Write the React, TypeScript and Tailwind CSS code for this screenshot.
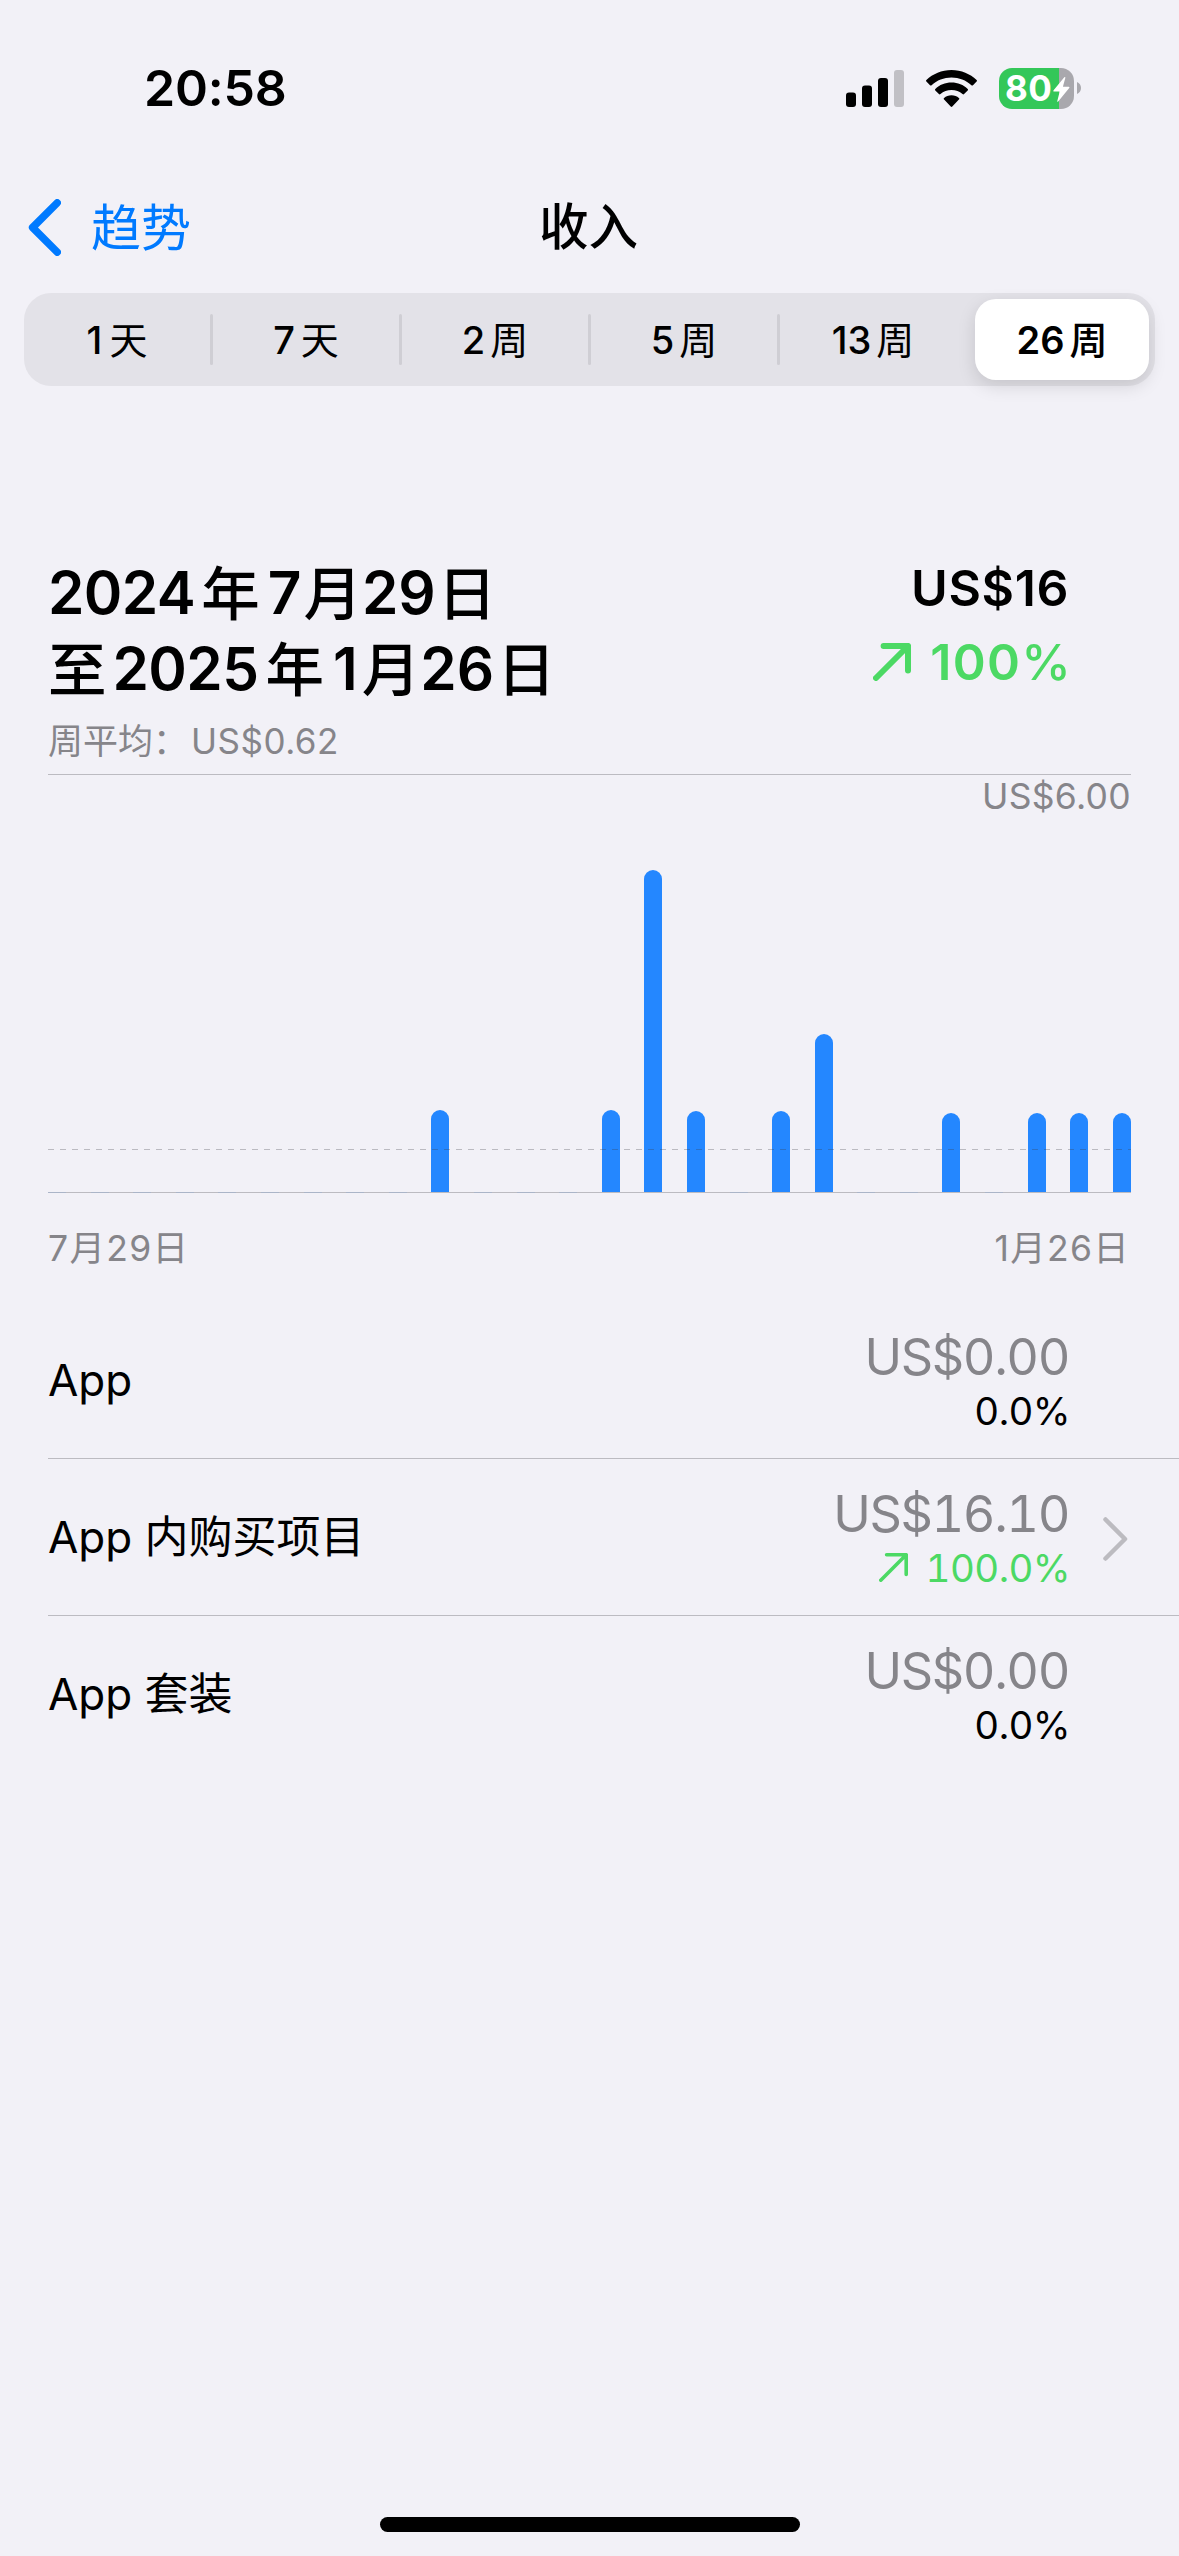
import React from "react";

const GRAY = "text-[#86858a]";

const periods = [
  { n: "1", unit: "天", gap: "ml-[7px]" },
  { n: "7", unit: "天", gap: "ml-[6px]" },
  { n: "2", unit: "周", gap: "ml-[5px]" },
  { n: "5", unit: "周", gap: "ml-[5px]" },
  { n: "13", unit: "周", gap: "ml-[5px]" },
];

// Weekly proceeds as bar heights in pixels, one entry for each of the 26 weeks
const weeks = [
  0, 0, 0, 0, 0, 0, 0, 0, 0, 82, 0, 0, 0, 82, 322, 81, 0, 81, 158, 0, 0, 79, 0,
  79, 79, 79,
];

const rows = [
  { label: "App", amount: "US$0.00", change: "0.0%", up: false },
  { label: "App 内购买项目", amount: "US$16.10", change: "100.0%", up: true },
  { label: "App 套装", amount: "US$0.00", change: "0.0%", up: false },
];

function Arrow({ size, stroke, className }: { size: number; stroke: number; className: string }) {
  const a = stroke / 2;
  const b = size - a;
  return (
    <svg width={size} height={size} className={className} fill="none" stroke="#4cd964" strokeWidth={stroke} strokeLinecap="round" strokeLinejoin="round">
      <path d={`M${a} ${b}L${b} ${a}M${size * 0.2 + a} ${a}H${b}V${size * 0.8 - a}`} />
    </svg>
  );
}

function StatusBar() {
  return (
    <div className="flex h-[176px] items-center justify-between pl-[144px] pr-[98px]">
      <span className="text-[50px] font-semibold leading-none tracking-[-0.2px]">20:58</span>
      <div className="flex items-center">
        <svg width="58" height="37" className="mr-[22px]">
          <rect x="0" y="22.500" width="10" height="14.500" rx="3" />
          <rect x="16" y="15.500" width="10" height="21.500" rx="3" />
          <rect x="32" y="8" width="10" height="29" rx="3" />
          <rect x="48" y="0" width="10" height="37" rx="3" fill="#c1c0c5" />
        </svg>
        <svg width="51" height="37" viewBox="0 0 51 37" className="mr-[22px]">
          <path d="M25.500 0C35.300 0 44.200 3.800 50.600 10.100Q51.300 10.800 50.600 11.600L47 15.200Q46.200 15.900 45.400 15.200C40 10.300 33.100 7.500 25.500 7.500S11 10.300 5.600 15.200Q4.800 15.900 4 15.200L.4 11.600Q-.3 10.800 .4 10.100C6.800 3.800 15.700 0 25.500 0Z" />
          <path d="M25.500 12.600C31.800 12.600 37.500 15 41.700 18.900Q42.500 19.700 41.700 20.500L38.100 24.100Q37.400 24.800 36.500 24.100C33.600 21.500 29.700 20.100 25.500 20.100S17.400 21.500 14.500 24.100Q13.600 24.800 12.900 24.100L9.300 20.500Q8.500 19.700 9.300 18.900C13.500 15 19.200 12.600 25.500 12.600Z" />
          <path d="M25.500 25.300C28.400 25.300 31 26.300 32.900 28Q33.700 28.700 32.900 29.500L26.300 36.500Q25.500 37.300 24.700 36.500L18.100 29.500Q17.300 28.700 18.100 28C20 26.300 22.600 25.300 25.500 25.300Z" />
        </svg>
        <div className="relative flex h-[41px] w-[75px] items-center overflow-hidden rounded-[13px] bg-gradient-to-r from-[#34c759] from-80% to-[#a9a8ad] to-80% pl-[6px]">
          <span className="text-[35px] font-bold leading-none tracking-[0.4px] text-white">80</span>
          <svg width="17" height="25" viewBox="0 0 17 25" className="absolute left-[54px] top-[9px]" fill="#fff">
            <path d="M11.300 .2Q12.600-.4 12.300 1L9.900 9.800H15.600Q17 9.900 16.200 11.100L5.200 24.400Q4 25.400 4.300 23.900L6.700 14.600H1.200Q-.2 14.400 .6 13.200Z" />
          </svg>
        </div>
        <svg width="4" height="12" className="ml-[3px]" fill="#a9a8ad">
          <path d="M0 0C2.400 .8 4 3.200 4 6S2.400 11.200 0 12Z" />
        </svg>
      </div>
    </div>
  );
}

function NavBar() {
  return (
    <div className="grid h-[102px] grid-cols-3 items-center text-[50px]">
      <div className="flex items-center pl-[28px] text-[#007aff]">
        <svg width="33" height="57" fill="none" stroke="currentColor" strokeWidth="7.500" strokeLinecap="round" strokeLinejoin="round">
          <path d="M29.200 3.800L4.600 28.500L29.200 53.200" />
        </svg>
        <span className="ml-[30px] pt-[2px] leading-none">趋势</span>
      </div>
      <h1 className="pr-[2px] pt-[2px] text-center text-[49.500px] font-medium leading-none">收入</h1>
    </div>
  );
}

function Segments() {
  return (
    <div className="mx-[24px] mt-[15px] flex h-[93px] items-center rounded-[27px] bg-[#e3e2e8] text-[38px] leading-none">
      {periods.map((p, i) => (
        <React.Fragment key={p.n}>
          <div className="flex w-[186px] items-center justify-center font-medium">
            <span>{p.n}</span>
            <span className={`${p.gap} pt-[1px] font-normal`}>{p.unit}</span>
          </div>
          {i < 4 && <div className="h-[51px] w-[3px] rounded-full bg-[#cfced4]" />}
        </React.Fragment>
      ))}
      <div className="ml-auto mr-[6px] flex h-[81px] w-[174px] items-center justify-center rounded-[21px] bg-white font-semibold shadow-[0_6px_18px_rgba(0,0,0,0.13)]">
        <span>26</span>
        <span className="ml-[5px] pt-[1px] font-medium">周</span>
      </div>
    </div>
  );
}

function Summary() {
  return (
    <div className="mx-[48px] flex h-[220px] justify-between border-b border-[#bcbbc1]">
      <div>
        <h2 className="text-[58.500px] font-semibold leading-[75px]">
          <div className="flex">
            <span className="tracking-[-0.6px]">2024</span>
            <span className="ml-[6px] pt-[1px] font-medium">年</span>
            <span className="ml-[8px]">7</span>
            <span className="ml-[2px] pt-[1px] font-medium">月</span>
            <span>29</span>
            <span className="ml-[2px] pt-[1px] font-medium">日</span>
          </div>
          <div className="flex">
            <span className="pt-[1px] font-medium">至</span>
            <span className="ml-[6px] tracking-[-0.6px]">2025</span>
            <span className="ml-[7px] pt-[1px] font-medium">年</span>
            <span className="ml-[9px]">1</span>
            <span className="ml-[4px] pt-[1px] font-medium">月</span>
            <span>26</span>
            <span className="ml-[3px] pt-[1px] font-medium">日</span>
          </div>
        </h2>
        <p className={`text-[35px] leading-[68px] ${GRAY}`}>
          周平均：<span className="ml-[3px] tracking-[0.5px]">US$0.62</span>
        </p>
      </div>
      <div className="-mt-[4px] pr-[62px] text-right text-[50px] font-semibold leading-[74px]">
        <div className="tracking-[0.6px]">US$16</div>
        <div className="-mr-[2px] flex items-center justify-end text-[#4cd964]">
          <Arrow size={38} stroke={6} className="mr-[19px]" />
          <span>
            <span className="tracking-[1.3px]">100</span>
            <span className="font-medium">%</span>
          </span>
        </div>
      </div>
    </div>
  );
}

function Chart() {
  return (
    <div className="mx-[48px]">
      <div className={`h-[42px] text-right text-[35.500px] leading-[43px] tracking-[0.3px] ${GRAY}`}>US$6.00</div>
      <div className="relative flex h-[376px] items-end justify-between border-b border-[#bcbbc1]">
        {weeks.map((h, i) =>
          h > 0 ? (
            <div key={i} className="w-[18px] rounded-t-[9px] bg-[#2487ff]" style={{ height: h }} />
          ) : (
            <div key={i} className="-mb-px h-px w-[18px] bg-[#abb5c8]" />
          )
        )}
        <div className="absolute inset-x-0 bottom-[42px] h-px bg-[repeating-linear-gradient(90deg,rgba(60,60,67,0.3)_0_6px,transparent_6px_12px)]" />
      </div>
      <div className={`flex h-[109px] items-center justify-between pr-px pt-[3px] text-[35.500px] leading-none tracking-[1.3px] ${GRAY}`}>
        <span>7月29日</span>
        <span>1月26日</span>
      </div>
    </div>
  );
}

function Breakdown() {
  return (
    <div className="ml-[48px]">
      {rows.map((r, i) => (
        <div key={r.label} className={`flex h-[157px] justify-between border-b ${i < 2 ? "border-[#bcbbc1]" : "border-transparent"}`}>
          <span className="text-[44px] leading-[157px]">{r.label}</span>
          <div className="flex items-center">
            <div className="pt-[7px] text-right leading-[54px] tabular-nums">
              <div className={`pr-px text-[50.500px] tracking-[-1.4px] ${GRAY}`}>{r.amount}</div>
              <div className={`flex items-center justify-end text-[38.500px] tracking-[-0.6px] ${r.up ? "text-[#4cd964]" : "text-black"}`}>
                {r.up && <Arrow size={29} stroke={3.6} className="mr-[18px]" />}
                {r.change}
              </div>
            </div>
            <div className="w-[109px] pl-[33px]">
              {r.up && (
                <svg width="25" height="44" className="mt-[4px]" fill="none" stroke="#bcbbc0" strokeWidth="4.500" strokeLinecap="round" strokeLinejoin="round">
                  <path d="M2.500 2.500L22 22L2.500 41.500" />
                </svg>
              )}
            </div>
          </div>
        </div>
      ))}
    </div>
  );
}

export default function App() {
  return (
    <div lang="zh-CN" className="flex h-[2556px] w-[1179px] flex-col overflow-hidden bg-[#f2f1f7] font-['Inter','Noto_Sans_CJK_SC',sans-serif] text-black">
      <StatusBar />
      <NavBar />
      <Segments />
      <div className="h-[169px]" />
      <Summary />
      <Chart />
      <Breakdown />
      <div className="mx-auto mb-[24px] mt-auto h-[15px] w-[420px] rounded-full bg-black" />
    </div>
  );
}
